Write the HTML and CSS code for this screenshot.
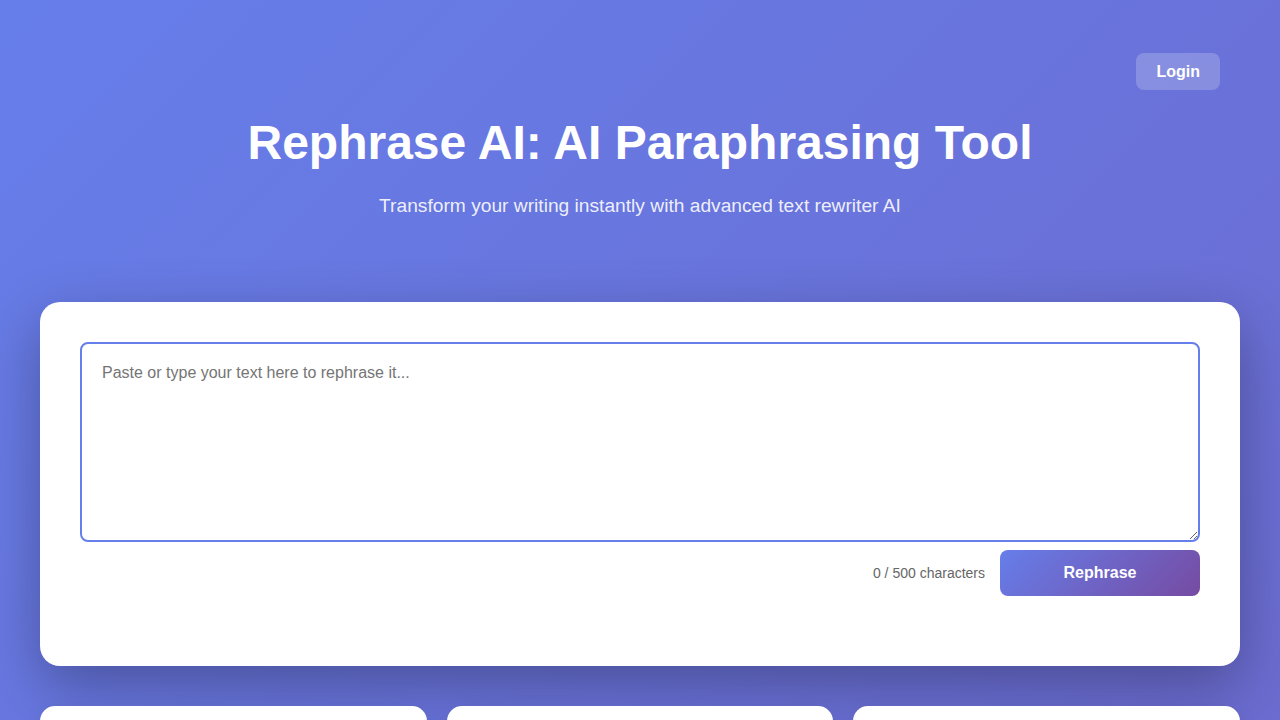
FILE: index.html
```html
<!DOCTYPE html>
<html lang="en">
<head>
<meta charset="UTF-8">
<title>Rephrase AI: AI Paraphrasing Tool</title>
<link rel="stylesheet" href="styles.css">
</head>
<body>
<div class="container">
  <header class="header">
    <div class="topbar">
      <button class="login-btn">Login</button>
    </div>
    <h1 class="title">Rephrase AI: AI Paraphrasing Tool</h1>
    <p class="subtitle">Transform your writing instantly with advanced text rewriter AI</p>
  </header>

  <main class="tool-card">
    <textarea class="input" placeholder="Paste or type your text here to rephrase it..."></textarea>
    <div class="controls">
      <span class="counter">0 / 500 characters</span>
      <button class="rephrase-btn">Rephrase</button>
    </div>
  </main>

  <section class="features">
    <div class="feature">
      <h3>Instant Results</h3>
      <p>Get rephrased text in seconds with our fast AI engine that understands context and meaning.</p>
    </div>
    <div class="feature">
      <h3>Preserve Meaning</h3>
      <p>Our paraphrasing tool keeps your original message intact while improving clarity and flow.</p>
    </div>
    <div class="feature">
      <h3>Free to Use</h3>
      <p>Rewrite up to 500 characters at a time without any cost or sign-up required.</p>
    </div>
  </section>

  <section class="panel">
    <h2>Why use Rephrase AI?</h2>
    <p>Rephrase AI helps students, writers and professionals rewrite sentences, paragraphs and articles with ease. Avoid repetition, improve readability and find new ways to express your ideas.</p>
    <p>Simply paste your text, click Rephrase and receive a fresh version of your content in moments.</p>
  </section>

  <section class="panel">
    <h2>How it works</h2>
    <p>1. Paste or type the text you want to rewrite into the box above.</p>
    <p>2. Click the Rephrase button and let the AI analyse your sentences.</p>
    <p>3. Copy the new version and use it wherever you need it.</p>
  </section>

  <section class="panel faq">
    <h2>Frequently Asked Questions</h2>
    <h4>Is Rephrase AI free?</h4>
    <p>Yes. You can rephrase up to 500 characters per request for free.</p>
    <h4>Does paraphrasing change the meaning of my text?</h4>
    <p>No. The AI is designed to keep your original meaning while changing wording and structure.</p>
    <h4>Can I use it for essays and articles?</h4>
    <p>Absolutely. Rephrase AI works well for essays, blog posts, emails and more.</p>
    <h4>Do I need an account?</h4>
    <p>No account is required, but logging in gives you access to your history.</p>
    <h4>Which languages are supported?</h4>
    <p>Rephrase AI currently works best with English text.</p>
    <h4>Is my text stored?</h4>
    <p>Your text is processed securely and is not shared with third parties.</p>
  </section>

  <footer class="footer">© 2024 Rephrase AI. All rights reserved.</footer>
</div>
</body>
</html>
```
FILE: styles.css
```css
* { box-sizing: border-box; }
html, body { margin: 0; padding: 0; }
body {
  font-family: "Liberation Sans", Arial, sans-serif;
  background: linear-gradient(135deg, #667eea 0%, #764ba2 100%);
  min-height: 4300px;
  color: #333;
}
.container {
  max-width: 1200px;
  margin: 0 auto;
  padding: 0 0 40px;
}
.header {
  text-align: center;
  color: #fff;
  padding: 53px 20px 0;
}
.topbar {
  display: flex;
  justify-content: flex-end;
}
.login-btn {
  font-family: inherit;
  font-size: 16px;
  font-weight: bold;
  color: #fff;
  background: rgba(255, 255, 255, 0.2);
  border: none;
  border-radius: 8px;
  height: 37px;
  padding: 0 20px;
  cursor: pointer;
}
.title {
  font-size: 48px;
  font-weight: bold;
  margin: 25px 0 0;
  line-height: 56px;
}
.subtitle {
  font-size: 19.2px;
  margin: 23px 0 0;
  color: rgba(255, 255, 255, 0.9);
  line-height: 24px;
}
.tool-card {
  margin-top: 84px;
  background: #fff;
  border-radius: 20px;
  padding: 40px 40px 70px;
  box-shadow: 0 20px 60px rgba(0, 0, 0, 0.3);
}
.input {
  display: block;
  width: 100%;
  height: 200px;
  border: 2px solid #667eea;
  border-radius: 8px;
  padding: 17px 20px 19px;
  font-family: inherit;
  font-size: 16px;
  line-height: 24px;
  color: #333;
  resize: vertical;
  outline: none;
}
.input::placeholder { color: #757575; }
.controls {
  display: flex;
  justify-content: flex-end;
  align-items: center;
  gap: 15px;
  margin-top: 8px;
}
.counter {
  font-size: 14px;
  color: #666;
}
.rephrase-btn {
  width: 200px;
  height: 46px;
  border: none;
  border-radius: 8px;
  background: linear-gradient(135deg, #667eea 0%, #764ba2 100%);
  color: #fff;
  font-family: inherit;
  font-size: 16px;
  font-weight: bold;
  cursor: pointer;
}
.features {
  display: grid;
  grid-template-columns: repeat(3, 1fr);
  gap: 20px;
  margin-top: 40px;
}
.feature {
  background: #fff;
  border-radius: 15px;
  padding: 30px;
  box-shadow: 0 10px 25px rgba(0, 0, 0, 0.1);
}
.feature h3 {
  margin: 0 0 12px;
  color: #667eea;
  font-size: 20px;
}
.feature p {
  margin: 0;
  color: #666;
  line-height: 1.6;
}
.panel {
  margin-top: 40px;
  background: #fff;
  border-radius: 20px;
  padding: 40px;
}
.panel h2 { margin: 0 0 16px; color: #333; }
.panel h4 { margin: 24px 0 8px; color: #444; font-size: 18px; }
.panel p { color: #555; line-height: 1.7; margin: 0 0 12px; }
.footer {
  text-align: center;
  color: rgba(255, 255, 255, 0.85);
  padding: 40px 0 0;
  font-size: 14px;
}
```
